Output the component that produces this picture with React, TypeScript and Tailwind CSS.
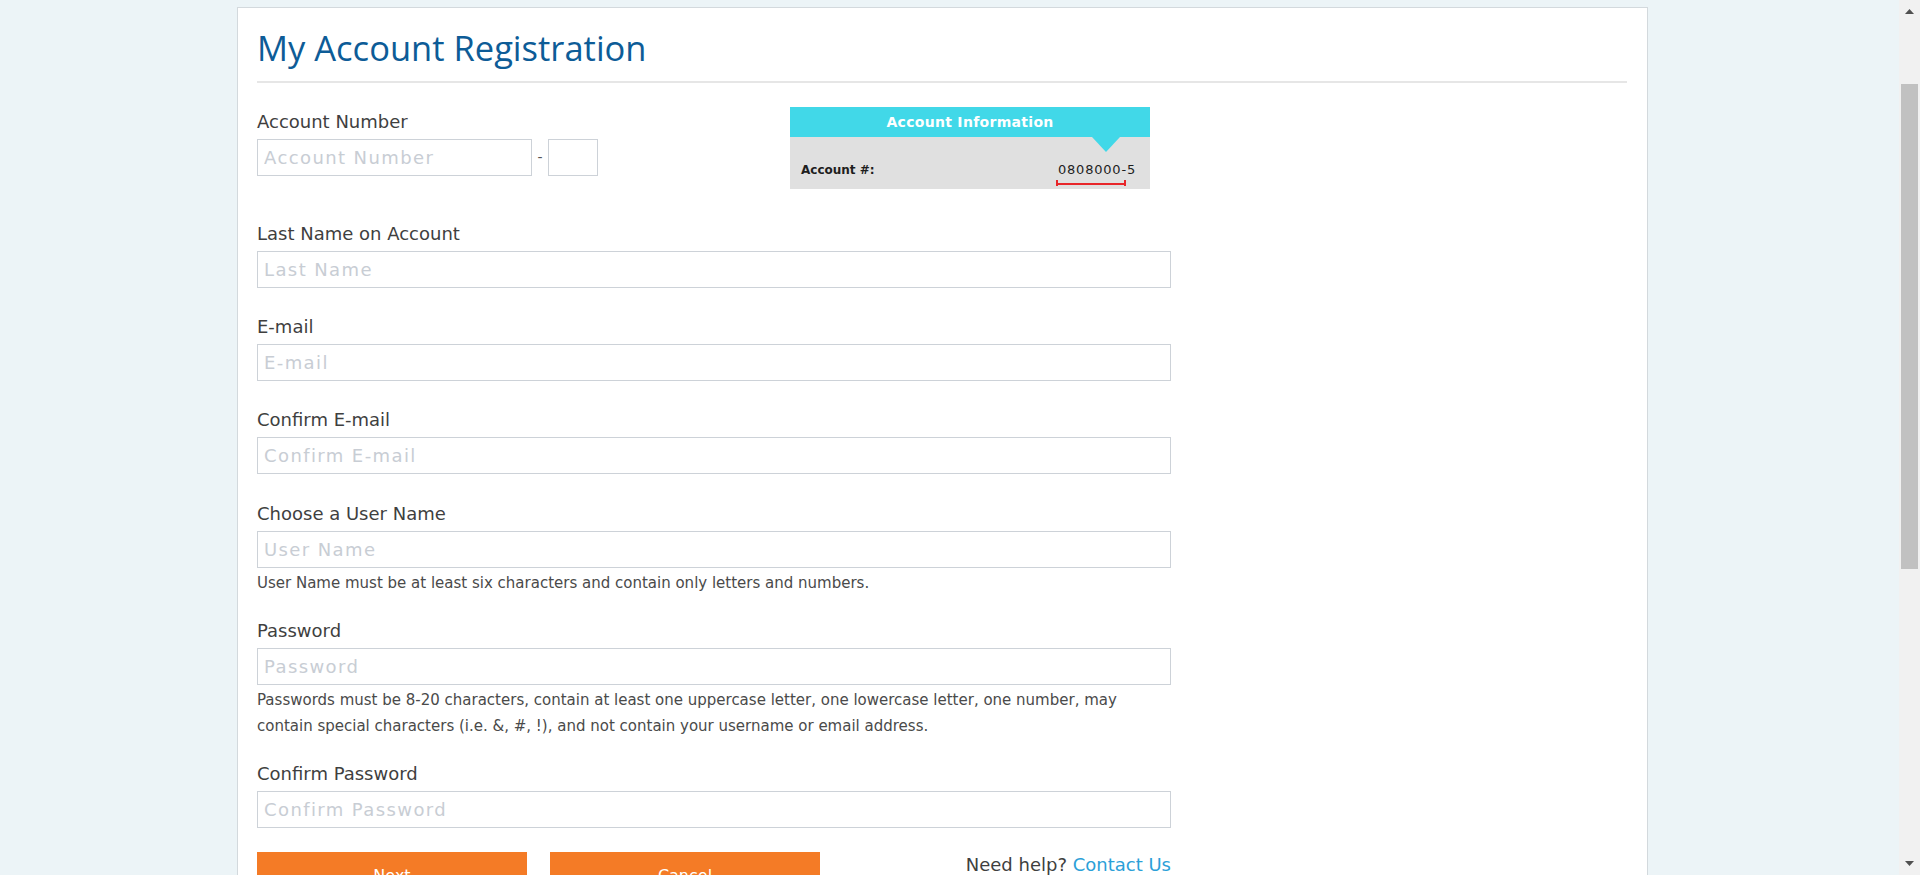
import React from "react";

const inputCls =
  "block w-full h-[37px] border border-[#cdd2d8] bg-white px-[6px] text-[18px] tracking-[1.4px] text-[#333] placeholder:text-[#c8cdd4] outline-none font-['DejaVu_Sans',sans-serif]";
const labelCls = "block text-[18px] leading-[20px] text-[#3f3f3f] mb-[7px]";
const helpCls = "mt-[2px] text-[15px] leading-[26px] text-[#4a4a4a]";

function Field({
  label,
  placeholder,
  className,
  children,
}: {
  label: string;
  placeholder: string;
  className: string;
  children?: React.ReactNode;
}) {
  return (
    <div className={className}>
      <label className={labelCls}>{label}</label>
      <input className={inputCls} placeholder={placeholder} />
      {children}
    </div>
  );
}

function InfoBox() {
  return (
    <div className="w-[360px] h-[82px] flex flex-col font-['DejaVu_Sans',sans-serif]">
      <div className="h-[30px] bg-[#41d8e8] flex items-center justify-center text-white text-[14px] font-bold tracking-[0.3px]">
        Account Information
      </div>
      <div className="relative flex-1 bg-[#e0e0e0] flex justify-between items-start pt-[26px] pl-[11px] pr-[14px]">
        <svg
          className="absolute left-[302px] top-0"
          width="28"
          height="15"
          viewBox="0 0 28 15"
        >
          <polygon points="0,0 28,0 14,15" fill="#41d8e8" />
        </svg>
        <span className="text-[12px] leading-[14px] font-bold text-[#1e1e1e]">
          Account #:
        </span>
        <span className="relative text-[13px] leading-[14px] tracking-[0.8px] text-[#1e1e1e]">
          0808000-5
          <svg
            className="absolute left-[-2px] top-[16px]"
            width="70"
            height="7"
            viewBox="0 0 70 7"
          >
            <rect x="0" y="4" width="70" height="2" fill="#e8262a" />
            <rect x="0" y="1" width="2" height="6" fill="#e8262a" />
            <rect x="68" y="1" width="2" height="6" fill="#e8262a" />
          </svg>
        </span>
      </div>
    </div>
  );
}

function Scrollbar() {
  return (
    <div className="w-[21px] h-[875px] bg-[#f1f1f1] flex flex-col items-stretch shrink-0">
      <div className="h-[21px] flex items-start justify-center pt-[9px]">
        <svg width="9" height="5" viewBox="0 0 9 5">
          <polygon points="4.5,0 9,5 0,5" fill="#505050" />
        </svg>
      </div>
      <div className="mt-[63px] mx-[2px] h-[485px] bg-[#c1c1c1]" />
      <div className="mt-auto h-[21px] flex items-end justify-center pb-[9px]">
        <svg width="9" height="5" viewBox="0 0 9 5">
          <polygon points="0,0 9,0 4.5,5" fill="#505050" />
        </svg>
      </div>
    </div>
  );
}

export default function App() {
  return (
    <div className="flex h-[875px] w-full overflow-hidden bg-[#ecf4f7] font-['DejaVu_Sans',sans-serif]">
      <div className="flex-1 min-w-0">
        <div className="ml-[237px] mt-[7px] w-[1411px] h-[1000px] bg-white border border-[#d3d9dd] pt-[20px] pl-[19px] pr-[20px]">
          <h1 className="text-[34.5px] leading-[40px] text-[#0d5c97] font-normal font-['Open_Sans',sans-serif] mb-[13px]">
            My Account Registration
          </h1>
          <div className="border-t-2 border-[#e6e6e6]" />

          <div className="w-[914px]">
            <div className="mt-[24px] flex items-start">
              <div className="w-[533px] pt-[5px]">
                <label className={labelCls}>Account Number</label>
                <div className="flex items-center">
                  <input
                    className={inputCls + " !w-[275px]"}
                    placeholder="Account Number"
                  />
                  <span className="w-[16px] text-center text-[14px] text-[#555]">
                    -
                  </span>
                  <input className={inputCls + " !w-[50px]"} />
                </div>
              </div>
              <InfoBox />
            </div>

            <Field
              className="mt-[35px]"
              label="Last Name on Account"
              placeholder="Last Name"
            />
            <Field className="mt-[29px]" label="E-mail" placeholder="E-mail" />
            <Field
              className="mt-[29px]"
              label="Confirm E-mail"
              placeholder="Confirm E-mail"
            />
            <Field
              className="mt-[30px]"
              label="Choose a User Name"
              placeholder="User Name"
            >
              <p className={helpCls}>
                User Name must be at least six characters and contain only
                letters and numbers.
              </p>
            </Field>
            <Field
              className="mt-[25px]"
              label="Password"
              placeholder="Password"
            >
              <p className={helpCls + " whitespace-nowrap"}>
                Passwords must be 8-20 characters, contain at least one
                uppercase letter, one lowercase letter, one number, may
                <br />
                contain special characters (i.e. &amp;, #, !), and not contain
                your username or email address.
              </p>
            </Field>
            <Field
              className="mt-[25px]"
              label="Confirm Password"
              placeholder="Confirm Password"
            />

            <div className="mt-[24px] flex items-start">
              <button className="w-[270px] h-[48px] bg-[#f47b26] text-white text-[16px]">
                Next
              </button>
              <button className="ml-[23px] w-[270px] h-[48px] bg-[#f47b26] text-white text-[16px]">
                Cancel
              </button>
              <div className="ml-auto mt-[3px] text-[18px] leading-[20px] text-[#3f3f3f]">
                Need help? <a className="text-[#2ba0d8]">Contact Us</a>
              </div>
            </div>
          </div>
        </div>
      </div>
      <Scrollbar />
    </div>
  );
}
